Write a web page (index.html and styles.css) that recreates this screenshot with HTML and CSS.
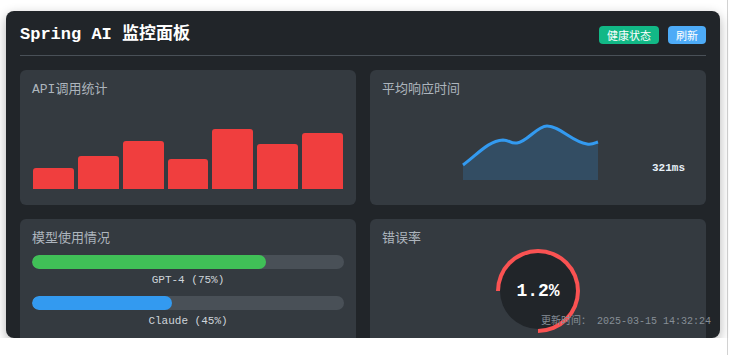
FILE: index.html
```html
<!DOCTYPE html>
<html lang="zh-CN">
<head>
<meta charset="utf-8">
<title>Spring AI 监控面板</title>
<link rel="stylesheet" href="styles.css">
</head>
<body>
<div class="dashboard">
  <header class="header">
    <h1 class="title">Spring AI 监控面板</h1>
    <div class="actions">
      <button class="btn btn-health">健康状态</button>
      <button class="btn btn-refresh">刷新</button>
    </div>
  </header>
  <div class="grid">
    <section class="card card-top">
      <h2 class="card-title">API调用统计</h2>
      <div class="bars">
        <div class="bar" style="height:21px"></div>
        <div class="bar" style="height:33px"></div>
        <div class="bar" style="height:48px"></div>
        <div class="bar" style="height:30px"></div>
        <div class="bar" style="height:60px"></div>
        <div class="bar" style="height:45px"></div>
        <div class="bar" style="height:56px"></div>
      </div>
    </section>
    <section class="card card-top">
      <h2 class="card-title">平均响应时间</h2>
      <div class="line-row">
        <svg class="line-chart" width="270" height="80" viewBox="0 0 270 80">
          <path class="area" d="M81,65 C96,54 106,41 121,40 C128,40 128,44 135,43 C145,42 155,26 165,26 C178,26 190,42 205,44 C210,45 213,43 216,42 L216,80 L81,80 Z"/>
          <path class="line" d="M81,65 C96,54 106,41 121,40 C128,40 128,44 135,43 C145,42 155,26 165,26 C178,26 190,42 205,44 C210,45 213,43 216,42"/>
        </svg>
        <span class="latency">321ms</span>
      </div>
    </section>
    <section class="card">
      <h2 class="card-title">模型使用情况</h2>
      <div class="usage">
        <div class="usage-item">
          <div class="track"><div class="fill fill-green" style="width:75%"></div></div>
          <div class="usage-label">GPT-4 (75%)</div>
        </div>
        <div class="usage-item">
          <div class="track"><div class="fill fill-blue" style="width:45%"></div></div>
          <div class="usage-label">Claude (45%)</div>
        </div>
      </div>
    </section>
    <section class="card">
      <h2 class="card-title">错误率</h2>
      <div class="gauge"><div class="gauge-inner">1.2%</div></div>
    </section>
  </div>
  <div class="updated">更新时间： 2025-03-15 14:32:24</div>
</div>
</body>
</html>
```

FILE: styles.css
```css
html {
  background: linear-gradient(to left, #ffffff 1px, #d2d2d2 1px, #d2d2d2 2px, #ffffff 2px);
  min-height: 100%;
}

body {
  margin: 0;
  font-family: "Liberation Mono", "Noto Sans CJK SC", monospace;
}

.dashboard {
  position: relative;
  margin: 11px 9px 0 6px;
  height: 327px;
  box-sizing: border-box;
  padding: 14px;
  background: #212529;
  border-radius: 8px;
  overflow: hidden;
  box-shadow: 0 4px 12px rgba(0, 0, 0, 0.3);
}

.header {
  display: flex;
  justify-content: space-between;
  align-items: center;
  padding-bottom: 10px;
  border-bottom: 1px solid #495057;
  margin-bottom: 14px;
}

.title {
  margin: 0;
  font-size: 17px;
  line-height: 20px;
  font-weight: bold;
  color: #ffffff;
}

.actions {
  display: flex;
  gap: 9px;
}

.btn {
  border: 0;
  border-radius: 4px;
  padding: 2px 8px;
  font-family: "Noto Sans CJK SC", sans-serif;
  font-size: 11px;
  line-height: 14px;
  color: #ffffff;
}

.btn-health {
  background: #12b886;
}

.btn-refresh {
  background: #4dabf7;
}

.grid {
  display: grid;
  grid-template-columns: 1fr 1fr;
  gap: 14px;
}

.card {
  background: #343a40;
  border-radius: 6px;
  padding: 12px 12px 16px;
}

.card-title {
  margin: 0;
  font-size: 13px;
  line-height: 15px;
  font-weight: normal;
  color: #adb5bd;
}

.bars {
  display: flex;
  align-items: flex-end;
  gap: 4px;
  height: 80px;
  margin-top: 12px;
  padding: 0 1px;
}

.bar {
  flex: 1;
  background: #f03e3e;
  border-radius: 3px 3px 0 0;
}

.line-row {
  display: flex;
  align-items: flex-end;
  margin-top: 3px;
}

.line-chart {
  display: block;
  flex: none;
}

.area {
  fill: rgba(51, 154, 240, 0.2);
}

.line {
  fill: none;
  stroke: #339af0;
  stroke-width: 3;
}

.latency {
  font-size: 11px;
  line-height: 13px;
  font-weight: bold;
  color: #e7f0f8;
  margin-bottom: 5px;
}

.usage {
  display: flex;
  flex-direction: column;
  gap: 9px;
  margin-top: 9px;
}

.track {
  height: 14px;
  border-radius: 7px;
  background: #495057;
  overflow: hidden;
}

.fill {
  height: 100%;
  border-radius: 7px;
}

.fill-green {
  background: #40c057;
}

.fill-blue {
  background: #339af0;
}

.usage-label {
  margin-top: 5px;
  text-align: center;
  font-size: 11px;
  line-height: 13px;
  color: #ced4da;
}

.gauge {
  width: 84px;
  height: 84px;
  margin: 3px auto 0;
  border-radius: 50%;
  background: conic-gradient(from -90deg, #fa5252 0deg 270deg, transparent 270deg);
  display: grid;
  place-items: center;
}

.gauge-inner {
  width: 76px;
  height: 76px;
  border-radius: 50%;
  background: #212529;
  display: grid;
  place-items: center;
  font-size: 18px;
  font-weight: bold;
  color: #ffffff;
}

.updated {
  position: absolute;
  right: 9px;
  bottom: 10px;
  font-size: 10px;
  line-height: 12px;
  color: #868e96;
}
```
